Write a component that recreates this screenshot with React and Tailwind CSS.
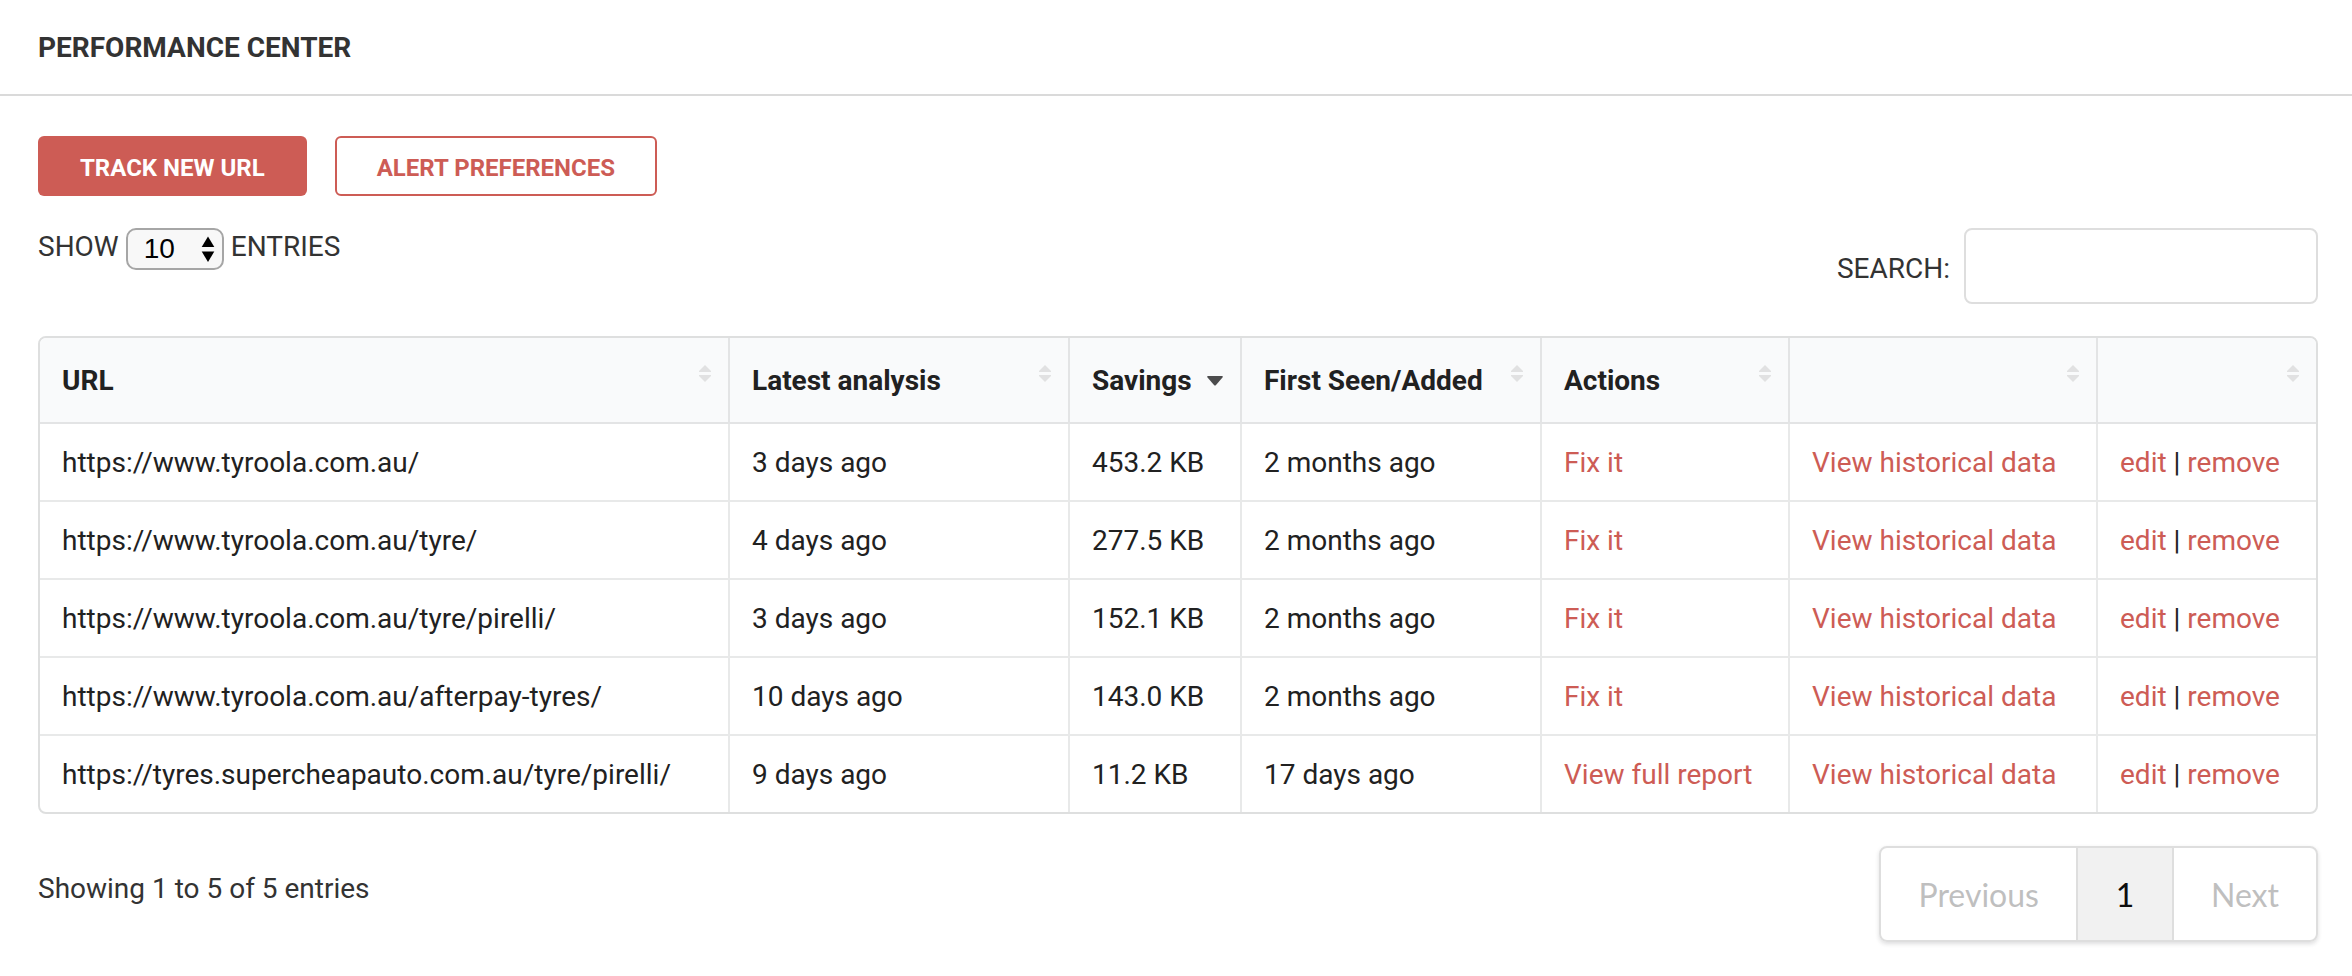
import React, { useState } from "react";

const columns = [
  { label: "URL", width: "w-[688px]" },
  { label: "Latest analysis", width: "w-[340px]" },
  { label: "Savings", width: "w-[172px]", sorted: true },
  { label: "First Seen/Added", width: "w-[300px]" },
  { label: "Actions", width: "w-[248px]" },
  { label: "", name: "History", width: "w-[308px]" },
  { label: "", name: "Manage", width: "w-[220px]" },
];

const rows = [
  ["https://www.tyroola.com.au/", "3 days ago", "453.2 KB", "2 months ago", "Fix it"],
  ["https://www.tyroola.com.au/tyre/", "4 days ago", "277.5 KB", "2 months ago", "Fix it"],
  ["https://www.tyroola.com.au/tyre/pirelli/", "3 days ago", "152.1 KB", "2 months ago", "Fix it"],
  ["https://www.tyroola.com.au/afterpay-tyres/", "10 days ago", "143.0 KB", "2 months ago", "Fix it"],
  ["https://tyres.supercheapauto.com.au/tyre/pirelli/", "9 days ago", "11.2 KB", "17 days ago", "View full report"],
];

function SortBoth() {
  return (
    <svg className="mt-[25px] h-[18px] w-3 shrink-0 self-start" viewBox="0 0 12 18" fill="#e1e1e2" aria-hidden="true">
      <path d="M6 0 L12 6 V7 H0 V6 Z" />
      <path d="M6 17 L12 11 V10 H0 V11 Z" />
    </svg>
  );
}

function SortDown() {
  return (
    <svg className="h-[10px] w-4 shrink-0" viewBox="0 0 16 10" fill="#4c4c4d" aria-hidden="true">
      <path d="M1 0 H15 Q16.400 0.400 15.500 1.600 L9 9 Q8 10 7 9 L0.500 1.600 Q-0.400 0.400 1 0 Z" />
    </svg>
  );
}

function TextLink({ children }) {
  return (
    <a href="#" className="text-[#cd5c55] hover:underline">
      {children}
    </a>
  );
}

function Cell({ children }) {
  return (
    <td className="h-[78px] border-b-2 border-l-2 border-[#e8e9e9] px-[22px] pt-[2px] pb-0 whitespace-nowrap group-last:h-[76px] group-last:border-b-0 first:border-l-0">
      {children}
    </td>
  );
}

export default function App() {
  const [query, setQuery] = useState("");
  return (
    <div className="bg-white font-['Roboto',sans-serif] text-[28px] leading-8 text-[#333]">
      <header className="border-b-2 border-[#dadada] px-[38px] pt-8 pb-[30px]">
        <h1 className="font-bold">PERFORMANCE CENTER</h1>
      </header>

      <main className="pt-10 pr-[34px] pl-[38px]">
        <div className="flex gap-7 text-2xl font-bold">
          <button type="button" className="h-[60px] rounded-md bg-[#cd5c55] px-[42px] pt-1 text-white">
            TRACK NEW URL
          </button>
          <button type="button" className="h-[60px] rounded-md border-2 border-[#cd5c55] bg-white px-10 pt-1 text-[#cd5c55]">
            ALERT PREFERENCES
          </button>
        </div>

        <div className="mt-8 flex items-start justify-between">
          <div className="flex items-start gap-[7px]">
            <label htmlFor="entries" className="pt-[3px]">SHOW</label>
            <div className="grid items-center">
              <select
                id="entries"
                className="col-start-1 row-start-1 h-[42px] w-[98px] appearance-none rounded-[10px] border-2 border-[#a6a6a6] bg-[#f8f8f8] pl-4 font-['Liberation_Sans',sans-serif] text-[28px] leading-8 text-black"
              >
                <option>10</option>
                <option>25</option>
                <option>50</option>
              </select>
              <svg className="pointer-events-none col-start-1 row-start-1 mr-[9px] h-[26px] w-[14px] justify-self-end" viewBox="0 0 14 26" fill="#000" aria-hidden="true">
                <path d="M7 0.500 L13.300 11 H0.700 Z" />
                <path d="M7 26 L13.300 15.500 H0.700 Z" />
              </svg>
            </div>
            <span className="pt-[3px]">ENTRIES</span>
          </div>
          <div className="flex items-center gap-[14px]">
            <label htmlFor="search" className="pt-[6px]">SEARCH:</label>
            <input
              id="search"
              type="search"
              value={query}
              onChange={(e) => setQuery(e.target.value)}
              className="h-[76px] w-[354px] rounded-lg border-2 border-[#dedede] bg-white px-4 outline-none"
            />
          </div>
        </div>

        <div className="mt-8 overflow-hidden rounded-lg border-2 border-[#dedfdf]">
          <table className="w-full table-fixed border-separate border-spacing-0 text-left text-[#212121]">
            <thead>
              <tr className="group">
                {columns.map((c, i) => (
                  <th
                    key={i}
                    scope="col"
                    aria-sort={c.sorted ? "descending" : "none"}
                    className={`${c.width} h-[86px] border-b-2 border-l-2 border-[#e3e4e5] bg-[#f9fafb] p-0 first:border-l-0`}
                  >
                    <button
                      type="button"
                      aria-label={c.label || c.name}
                      className="flex h-[84px] w-full items-center justify-between pt-[2px] pr-[17px] pl-[22px] font-bold whitespace-nowrap"
                    >
                      <span>{c.label}</span>
                      {c.sorted ? <SortDown /> : <SortBoth />}
                    </button>
                  </th>
                ))}
              </tr>
            </thead>
            <tbody>
              {rows.map(([url, latest, savings, added, action]) => (
                <tr key={url} className="group">
                  <Cell>{url}</Cell>
                  <Cell>{latest}</Cell>
                  <Cell>{savings}</Cell>
                  <Cell>{added}</Cell>
                  <Cell><TextLink>{action}</TextLink></Cell>
                  <Cell><TextLink>View historical data</TextLink></Cell>
                  <Cell><TextLink>edit</TextLink> | <TextLink>remove</TextLink></Cell>
                </tr>
              ))}
            </tbody>
          </table>
        </div>

        <div className="mt-8 flex items-start justify-between pb-8">
          <p className="pt-[27px]">Showing 1 to 5 of 5 entries</p>
          <nav
            aria-label="Pagination"
            className="flex h-24 overflow-hidden rounded-lg border-2 border-[#dedede] font-['Lato',sans-serif] text-[32px] leading-10 shadow-[0_2px_4px_0_rgba(34,36,38,0.15)]"
          >
            <button type="button" disabled className="px-[37px] pt-[2px] text-[#bfbfbf]">Previous</button>
            <button type="button" aria-current="page" className="w-[98px] border-x-2 border-[#dedede] bg-[#f1f1f1] pt-[2px] text-[#0d0d0d]">1</button>
            <button type="button" disabled className="px-[37px] pt-[2px] text-[#bfbfbf]">Next</button>
          </nav>
        </div>
      </main>
    </div>
  );
}
